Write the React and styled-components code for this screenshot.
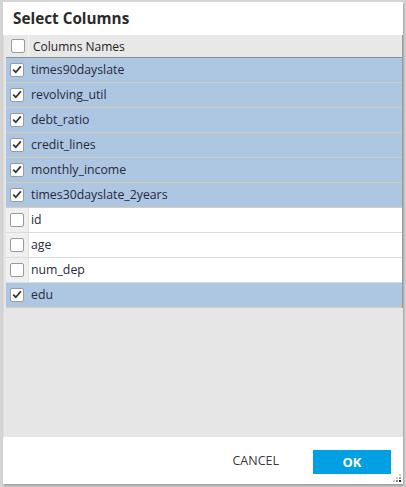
import React from "react";
import styled, { createGlobalStyle } from "styled-components";

const Global = createGlobalStyle`
  html, body { margin: 0; padding: 0; background: #d4d4d4; }
  body { font-family: "Open Sans", "DejaVu Sans", sans-serif; }
`;

const Page = styled.div`
  width: 406px;
  height: 487px;
  box-sizing: border-box;
  padding: 2px 3px 3px 3px;
  display: flex;
`;

const Dialog = styled.div`
  flex: 1;
  background: #fff;
  display: flex;
  flex-direction: column;
  box-shadow: 1px 2px 2px rgba(0, 0, 0, 0.25);
  position: relative;
`;

const Title = styled.div`
  height: 33px;
  display: flex;
  align-items: center;
  padding-left: 10px;
  font-size: 15.3px;
  font-weight: 700;
  color: #2b2b2b;
  box-sizing: border-box;
  padding-bottom: 1px;
`;

const Grid = styled.div`
  flex: 1;
  background: #e6e6e6;
  padding-left: 2px;
  border-left: 1px solid #dcdcdc;
  display: flex;
  flex-direction: column;
`;

const Table = styled.div`
  border-right: 1px solid #9a9a9a;
  display: flex;
  flex-direction: column;
`;

const Row = styled.div`
  display: grid;
  grid-template-columns: 23px 1fr;
  height: ${(p) => (p.$header ? 23 : 25)}px;
  box-sizing: border-box;
  border-bottom: 1px solid
    ${(p) => (p.$header ? "#8f8f8f" : p.$selected ? "#d6cdb4" : "#dcdcdc")};
  background: ${(p) =>
    p.$header ? "#e8e8e8" : p.$selected ? "#adc6e2" : "#ffffff"};
`;

const CheckCell = styled.div`
  display: flex;
  align-items: center;
  justify-content: center;
  background: ${(p) => (p.$plain ? "#efefef" : "transparent")};
  border-right: 1px solid
    ${(p) => (p.$header ? "#f4f4f4" : p.$plain ? "#e2e2e2" : "transparent")};
`;

const NameCell = styled.div`
  display: flex;
  align-items: center;
  padding-left: ${(p) => (p.$header ? 4 : 2)}px;
  font-size: ${(p) => (p.$header ? 12 : 12.3)}px;
  color: ${(p) => (p.$header ? "#1e1e1e" : "#2a2a3a")};
  padding-bottom: ${(p) => (p.$header ? 0 : 1)}px;
`;

const Box = styled.span`
  width: 14px;
  height: 14px;
  box-sizing: border-box;
  border: 1px solid #9b9b9b;
  border-radius: 2px;
  background: #fff;
  display: flex;
  align-items: center;
  justify-content: center;
  margin-left: ${(p) => (p.$header ? 1 : 0)}px;
  margin-bottom: 1px;
`;

const Footer = styled.div`
  height: 47px;
  display: flex;
  align-items: center;
  justify-content: flex-end;
  padding-right: 12px;
  gap: 22px;
  background: #fff;
`;

const TextButton = styled.button`
  border: none;
  background: transparent;
  font-family: "Open Sans", sans-serif;
  font-size: 12.5px;
  color: #3a3a3a;
  padding: 0 10px;
  height: 24px;
  margin-right: 2px;
  cursor: pointer;
`;

const PrimaryButton = styled.button`
  border: none;
  background: #00a0e2;
  color: #fff;
  font-family: "Open Sans", sans-serif;
  font-weight: 700;
  font-size: 13px;
  width: 78px;
  height: 24px;
  margin-top: 2px;
  cursor: pointer;
`;

const Grip = styled.svg`
  position: absolute;
  right: 1px;
  bottom: 1px;
`;

const Check = () => (
  <svg width="10" height="9" viewBox="0 0 10 9">
    <path d="M1.2 4.6 L3.8 7.2 L8.8 1.4" fill="none" stroke="#333" strokeWidth="1.7" />
  </svg>
);

const columns = [
  ["times90dayslate", true],
  ["revolving_util", true],
  ["debt_ratio", true],
  ["credit_lines", true],
  ["monthly_income", true],
  ["times30dayslate_2years", true],
  ["id", false],
  ["age", false],
  ["num_dep", false],
  ["edu", true],
];

export default function App() {
  return (
    <>
      <Global />
      <Page>
        <Dialog>
          <Title>Select Columns</Title>
          <Grid>
            <Table>
              <Row $header>
                <CheckCell $header>
                  <Box $header />
                </CheckCell>
                <NameCell $header>Columns Names</NameCell>
              </Row>
              {columns.map(([name, sel]) => (
                <Row key={name} $selected={sel}>
                  <CheckCell $plain={!sel}>
                    <Box>{sel && <Check />}</Box>
                  </CheckCell>
                  <NameCell>{name}</NameCell>
                </Row>
              ))}
            </Table>
          </Grid>
          <Footer>
            <TextButton>CANCEL</TextButton>
            <PrimaryButton>OK</PrimaryButton>
          </Footer>
          <Grip width="10" height="10" viewBox="0 0 10 10">
            <rect x="7" y="1" width="2" height="2" fill="#ccc" />
            <rect x="4" y="4" width="2" height="2" fill="#ccc" />
            <rect x="7" y="4" width="2" height="2" fill="#999" />
            <rect x="1" y="7" width="2" height="2" fill="#ccc" />
            <rect x="4" y="7" width="2" height="2" fill="#888" />
            <rect x="7" y="7" width="2" height="2" fill="#222" />
          </Grip>
        </Dialog>
      </Page>
    </>
  );
}
